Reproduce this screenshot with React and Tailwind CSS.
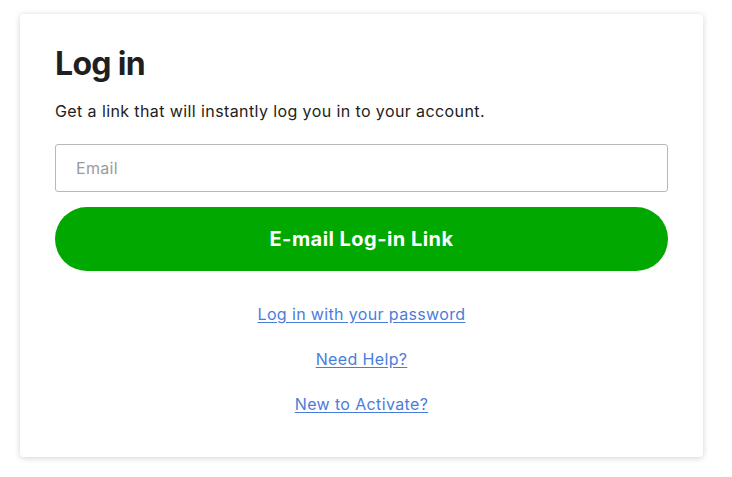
export default function App() {
  return (
    <div className="min-h-[477px] w-[732px] bg-white pl-[20px] pt-[14px]" style={{ fontFamily: "Inter, 'Liberation Sans', sans-serif" }}>
      <div className="w-[683px] rounded-[4px] bg-white px-[35px] pt-[30px] pb-[42px] shadow-[0_1px_6px_rgba(0,0,0,0.18)]">
        <h1 className="text-[32px] font-bold leading-[40px] text-[#1f1f1f] tracking-[-0.7px]">Log in</h1>
        <p className="mt-[16px] text-[16px] leading-[22px] text-[#222] tracking-[0.4px]">Get a link that will instantly log you in to your account.</p>
        <input
          type="text"
          placeholder="Email"
          className="mt-[22px] block h-[48px] w-full rounded-[3px] border border-[#b8b8b8] px-[20px] text-[16px] tracking-[0.3px] text-[#222] placeholder:text-[#9b9b9b] outline-none"
        />
        <button className="mt-[15px] flex h-[64px] w-full items-center justify-center rounded-full bg-[#00a800] text-[20px] font-bold text-white tracking-[0.45px]">
          E-mail Log-in Link
        </button>
        <div className="mt-[32px] flex flex-col items-center gap-[23px] text-[16px] leading-[22px] text-[#4a7ddb] tracking-[0.36px]">
          <a href="#" className="underline underline-offset-2">Log in with your password</a>
          <a href="#" className="underline underline-offset-2">Need Help?</a>
          <a href="#" className="underline underline-offset-2">New to Activate?</a>
        </div>
      </div>
    </div>
  );
}
